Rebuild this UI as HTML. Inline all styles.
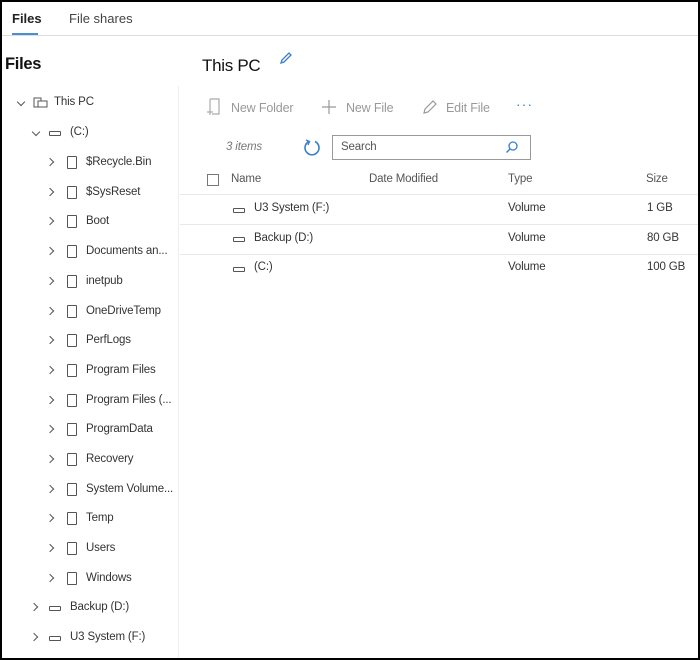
<!DOCTYPE html><html><head><style>
*{margin:0;padding:0;box-sizing:border-box}
body{width:700px;height:660px;background:#fff;font-family:"Liberation Sans",sans-serif;color:#222;position:relative;overflow:hidden}
.frame{position:absolute;left:0;top:0;width:700px;height:660px;border:2px solid #000;pointer-events:none}
.a{position:absolute;white-space:nowrap}
.t{font-size:11.5px;color:#333;letter-spacing:-0.15px}
.chev{position:absolute;width:6px;height:6px;border-right:1.3px solid #555;border-bottom:1.3px solid #555}
.r{transform:rotate(-45deg)}
.d{transform:rotate(45deg)}
.fold{position:absolute;width:10px;height:13px;border:1.3px solid #555;border-radius:1px}
.drv{position:absolute;width:12px;height:5px;border:1.3px solid #555;border-radius:1px}
.hl{position:absolute;height:1px;background:#e8e8e8}
</style></head><body>
<div class="a" style="left:12px;top:11px;font-size:13px;font-weight:bold;color:#222">Files</div>
<div class="a" style="left:69px;top:11px;font-size:13px;color:#444">File shares</div>
<div style="position:absolute;left:12px;top:33px;width:26px;height:2px;background:#4a90d0"></div>
<div class="hl" style="left:2px;top:35px;width:696px;background:#ddd"></div>
<div style="position:absolute;left:178px;top:86px;width:1px;height:572px;background:#eee"></div>
<div class="a" style="left:5px;top:55px;font-size:16.5px;font-weight:bold;color:#111;letter-spacing:-0.3px">Files</div>
<div class="a" style="left:202px;top:56px;font-size:17px;color:#111;letter-spacing:-0.3px">This PC</div>
<svg class="a" style="left:279px;top:51px" width="14" height="14" viewBox="0 0 14 14"><path d="M2 12l1-3 7-7 2 2-7 7z" fill="none" stroke="#3a7fc8" stroke-width="1.3"/></svg>

<div class="chev d" style="left:18px;top:99px"></div>
<svg class="a" style="left:33px;top:97px" width="16" height="12"><rect x="1" y="1" width="7" height="9" fill="none" stroke="#555"/><rect x="5" y="4" width="9" height="6" fill="#fff" stroke="#555"/></svg>
<div class="a t" style="left:54px;top:96px">This PC</div>
<div class="chev d" style="left:33px;top:129px"></div>
<div class="drv" style="left:49px;top:131px"></div>
<div class="a t" style="left:70px;top:126px">(C:)</div>
<div id="tree"></div>
<script>
var items=["$Recycle.Bin","$SysReset","Boot","Documents an...","inetpub","OneDriveTemp","PerfLogs","Program Files","Program Files (...","ProgramData","Recovery","System Volume...","Temp","Users","Windows"];
var h="";items.forEach(function(n,i){var y=163+i*29.7;
h+='<div class="chev r" style="left:47px;top:'+(y-4)+'px"></div><div class="fold" style="left:67px;top:'+(y-7)+'px"></div><div class="a t" style="left:86px;top:'+(y-7)+'px">'+n+'</div>';});
[["Backup (D:)",608],["U3 System (F:)",638]].forEach(function(p){var y=p[1];
h+='<div class="chev r" style="left:31px;top:'+(y-4)+'px"></div><div class="drv" style="left:49px;top:'+(y-2)+'px"></div><div class="a t" style="left:70px;top:'+(y-7)+'px">'+p[0]+'</div>';});
document.getElementById("tree").innerHTML=h;
</script>

<svg class="a" style="left:206px;top:98px" width="16" height="18"><path d="M4 1h9v15H6M4 1v11M1 14h6M4 11v6" fill="none" stroke="#aaa" stroke-width="1.2"/></svg>
<div class="a t" style="left:231px;top:101px;color:#999;font-size:12.5px">New Folder</div>
<svg class="a" style="left:321px;top:99px" width="16" height="16"><path d="M8 1v14M1 8h14" stroke="#999" stroke-width="1.2"/></svg>
<div class="a t" style="left:346px;top:101px;color:#999;font-size:12.5px">New File</div>
<svg class="a" style="left:422px;top:99px" width="16" height="16"><path d="M2 14l1-4 8-8 3 3-8 8z" fill="none" stroke="#999" stroke-width="1.2"/></svg>
<div class="a t" style="left:446px;top:101px;color:#999;font-size:12.5px">Edit File</div>
<div class="a" style="left:516px;top:96px;color:#3a7fc8;font-size:14px;letter-spacing:1px">···</div>
<div class="a t" style="left:226px;top:141px;font-style:italic;color:#777">3 items</div>
<svg class="a" style="left:302px;top:138px" width="20" height="20"><path d="M7 3.5A7 7 0 1 0 13 3.5" fill="none" stroke="#3a7fc8" stroke-width="1.6"/><path d="M4 2l3.5 1.5L6 7" fill="none" stroke="#3a7fc8" stroke-width="1.4"/></svg>
<div style="position:absolute;left:332px;top:135px;width:199px;height:25px;border:1px solid #999"></div>
<div class="a t" style="left:341px;top:141px;color:#555">Search</div>
<svg class="a" style="left:505px;top:140px" width="14" height="14"><circle cx="8" cy="6" r="4" fill="none" stroke="#3a7fc8" stroke-width="1.3"/><path d="M5 9l-3.5 3.5" stroke="#3a7fc8" stroke-width="1.4"/></svg>
<div style="position:absolute;left:207px;top:174px;width:12px;height:12px;border:1px solid #777"></div>
<div class="a t" style="left:231px;top:173px;color:#555">Name</div>
<div class="a t" style="left:369px;top:173px;color:#555">Date Modified</div>
<div class="a t" style="left:508px;top:173px;color:#555">Type</div>
<div class="a t" style="left:646px;top:173px;color:#555">Size</div>
<div class="hl" style="left:180px;top:194px;width:518px"></div>
<div class="hl" style="left:180px;top:224px;width:518px"></div>
<div class="hl" style="left:180px;top:254px;width:518px"></div>
<div class="drv" style="left:233px;top:208px"></div><div class="a t" style="left:254px;top:202px">U3 System (F:)</div><div class="a t" style="left:508px;top:202px">Volume</div><div class="a t" style="left:647px;top:202px">1 GB</div>
<div class="drv" style="left:233px;top:237px"></div><div class="a t" style="left:254px;top:232px">Backup (D:)</div><div class="a t" style="left:508px;top:232px">Volume</div><div class="a t" style="left:647px;top:232px">80 GB</div>
<div class="drv" style="left:233px;top:267px"></div><div class="a t" style="left:254px;top:261px">(C:)</div><div class="a t" style="left:508px;top:261px">Volume</div><div class="a t" style="left:647px;top:261px">100 GB</div>
<div class="frame"></div>
</body></html>
